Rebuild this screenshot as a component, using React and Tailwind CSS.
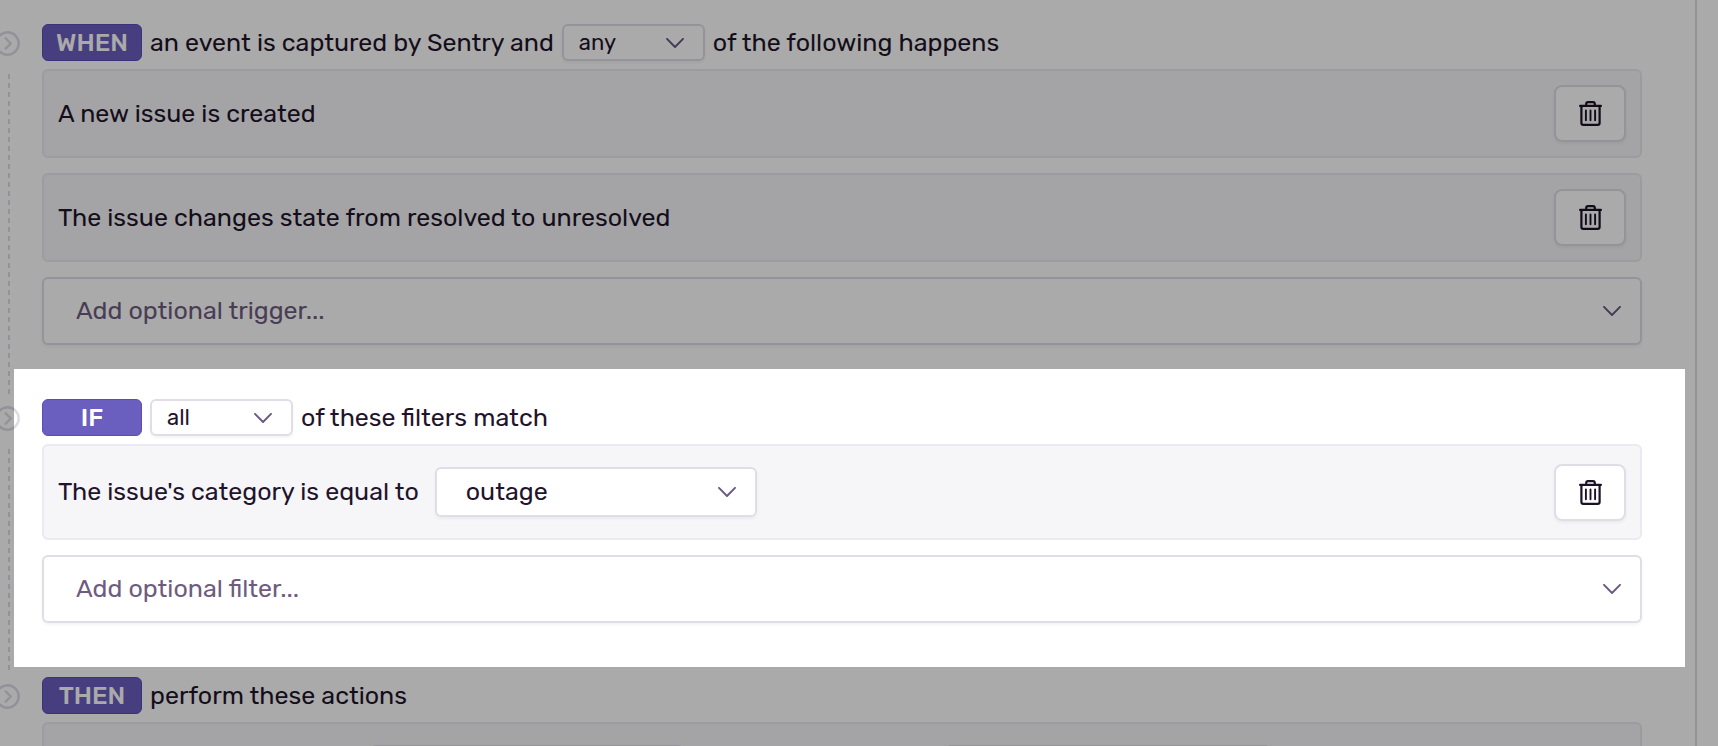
import React from "react";

function Chevron() {
  return (
    <svg
      viewBox="0 0 18 10"
      className="pointer-events-none absolute top-1/2 right-[21px] h-[10px] w-[18px] -translate-y-1/2"
      fill="none"
      stroke="#6a5880"
      strokeWidth="1.9"
      strokeLinecap="round"
      strokeLinejoin="round"
      aria-hidden="true"
    >
      <path d="M1 0.9 L9 9 L17 0.9" />
    </svg>
  );
}

const selectBase =
  "w-full appearance-none rounded-md border-2 border-[#e0dde7] bg-white shadow-[0_2px_3px_rgba(43,34,51,0.05)] outline-none";

function SmallSelect({ label, value, options }) {
  return (
    <div className="relative w-[143px]">
      <select
        aria-label={label}
        defaultValue={value}
        className={`${selectBase} block h-[37px] pl-[15px] text-[22px] leading-[30px] text-[#1f142b]`}
      >
        {options.map((o) => (
          <option key={o}>{o}</option>
        ))}
      </select>
      <Chevron />
    </div>
  );
}

function FieldSelect({ label, value, className }) {
  return (
    <div className={`relative ${className}`}>
      <select
        aria-label={label}
        defaultValue={value}
        className={`${selectBase} block h-[50px] pl-[29px] text-[25px] leading-[32px] text-[#1f142b]`}
      >
        <option>{value}</option>
      </select>
      <Chevron />
    </div>
  );
}

function AddSelect({ placeholder }) {
  return (
    <div className="relative">
      <select
        aria-label={placeholder}
        className={`${selectBase} block h-[68px] pl-8 text-[25px] leading-[32px] text-[#6e5c80]`}
      >
        <option>{placeholder}</option>
      </select>
      <Chevron />
    </div>
  );
}

function DeleteButton() {
  return (
    <button
      type="button"
      aria-label="Delete"
      className="flex h-[57px] w-[72px] items-center justify-center rounded-lg border-2 border-[#e0dde7] bg-white shadow-[0_2px_3px_rgba(43,34,51,0.05)]"
    >
      <svg
        viewBox="0 0 23 25"
        className="h-[25px] w-[23px]"
        fill="none"
        stroke="#1d1127"
        strokeWidth="2.2"
        strokeLinecap="round"
        strokeLinejoin="round"
        aria-hidden="true"
      >
        <path d="M1.1 4.9 H21.9" />
        <path d="M7.2 4.7 V3 Q7.2 1.2 9 1.2 H14 Q15.8 1.2 15.8 3 V4.7" />
        <path d="M2.4 5 V22 Q2.4 23.9 4.3 23.9 H18.7 Q20.6 23.9 20.6 22 V5" />
        <path d="M6.9 9.5 V19.3 M11.5 9.5 V19.3 M16.1 9.5 V19.3" strokeWidth="1.9" />
      </svg>
    </button>
  );
}

function RuleCard({ children, removable = true, className = "" }) {
  return (
    <div
      className={`flex items-center justify-between rounded-md border-2 border-[#ebe9f1] bg-[#f6f6f9] px-[14px] ${className}`}
    >
      <div className="flex items-center gap-4">{children}</div>
      {removable && <DeleteButton />}
    </div>
  );
}

function Badge({ children }) {
  return (
    <span className="flex h-[37px] w-[100px] items-center justify-center rounded-md border border-[#5b4cba] bg-[#6a5ebe] font-medium text-white">
      {children}
    </span>
  );
}

function Step({ heading, spotlight, last, children }) {
  return (
    <section className="relative flex">
      <div className="flex w-[42px] shrink-0 flex-col pt-[7px] pb-[3px]">
        <svg
          viewBox="0 0 25 25"
          className="-ml-[5px] h-[25px] w-[25px]"
          fill="none"
          stroke="#dedae6"
          strokeWidth="2.4"
          strokeLinecap="round"
          strokeLinejoin="round"
          aria-hidden="true"
        >
          <circle cx="12.5" cy="12.5" r="11.2" />
          <path d="M10.7 7.4 L15.8 12.5 L10.7 17.6" />
        </svg>
        {!last && (
          <div className="mt-[18px] ml-2 w-[2px] flex-1 bg-[repeating-linear-gradient(to_bottom,#dedae6_0px,#dedae6_5px,transparent_5px,transparent_9px)]" />
        )}
      </div>
      <div className="min-w-0 flex-1 pr-[53px] pb-[54px]">
        <div className="mb-2 flex h-[37px] items-center gap-2">{heading}</div>
        <div className="flex flex-col gap-[15px]">{children}</div>
      </div>
      {spotlight && (
        <div className="pointer-events-none absolute -top-[30px] right-[10px] bottom-[10px] left-[14px] z-10 shadow-[0_0_0_4000px_rgba(0,0,0,0.333)]" />
      )}
    </section>
  );
}

export default function App() {
  return (
    <div className="h-screen overflow-hidden bg-white pr-[21px] font-['Rubik','Roboto',sans-serif] text-[25px] leading-[32px] text-[#1f142b]">
      <main className="min-h-full border-r-2 border-[#e0dde7] pt-6">
        <Step
          heading={
            <>
              <Badge>WHEN</Badge>
              <span>an event is captured by Sentry and</span>
              <SmallSelect label="Trigger match" value="any" options={["any", "all"]} />
              <span>of the following happens</span>
            </>
          }
        >
          <RuleCard className="h-[89px]">A new issue is created</RuleCard>
          <RuleCard className="h-[89px]">
            The issue changes state from resolved to unresolved
          </RuleCard>
          <AddSelect placeholder="Add optional trigger..." />
        </Step>

        <Step
          spotlight
          heading={
            <>
              <Badge>IF</Badge>
              <SmallSelect label="Filter match" value="all" options={["all", "any", "none"]} />
              <span>of these filters match</span>
            </>
          }
        >
          <RuleCard className="h-24">
            <span>The issue's category is equal to</span>
            <FieldSelect label="Category" value="outage" className="w-[322px]" />
          </RuleCard>
          <AddSelect placeholder="Add optional filter..." />
        </Step>

        <Step
          last
          heading={
            <>
              <Badge>THEN</Badge>
              <span>perform these actions</span>
            </>
          }
        >
          <RuleCard removable={false} className="h-24">
            <FieldSelect label="Action target" value="" className="ml-[312px] w-[314px]" />
            <FieldSelect label="Action recipient" value="" className="ml-[245px] w-[326px]" />
          </RuleCard>
        </Step>
      </main>
    </div>
  );
}
